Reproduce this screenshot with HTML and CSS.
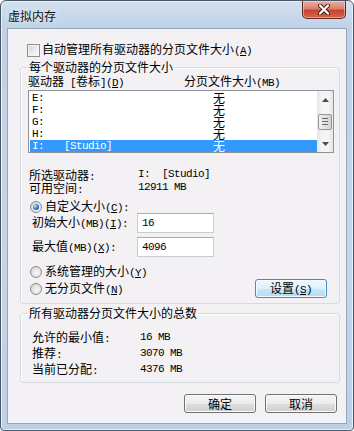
FILE: index.html
```html
<!DOCTYPE html>
<html lang="zh-CN">
<head>
    <meta charset="UTF-8">
    <title>虚拟内存</title>
    <link rel="stylesheet" href="styles.css">
</head>
<body>
    <div class="window">
        <!-- 标题栏 -->
        <div class="titlebar">
            <span class="title">虚拟内存</span>
            <div class="close">
                <svg width="12" height="11" viewBox="0 0 12 11">
                    <path d="M2 1.5 L10 9.5 M10 1.5 L2 9.5" stroke="#4a1a14" stroke-width="4" stroke-linecap="round"/>
                    <path d="M2 1.5 L10 9.5 M10 1.5 L2 9.5" stroke="#fff" stroke-width="2.2" stroke-linecap="round"/>
                </svg>
            </div>
        </div>

        <div class="client">
            <div class="check-row">
                <span class="checkbox"></span>
                <span>自动管理所有驱动器的分页文件大小<span class="m">(<u>A</u>)</span></span>
            </div>

            <!-- 每个驱动器 -->
            <fieldset class="group group-drives">
                <legend>每个驱动器的分页文件大小</legend>
                <div class="col-heads">
                    <span class="col-drive">驱动器<span class="m"> [</span>卷标<span class="m">](<u>D</u>)</span></span>
                    <span>分页文件大小<span class="m">(MB)</span></span>
                </div>
                <div class="listbox">
                    <ul class="drives">
                        <li><span class="drv m">E:</span><span class="size">无</span></li>
                        <li><span class="drv m">F:</span><span class="size">无</span></li>
                        <li><span class="drv m">G:</span><span class="size">无</span></li>
                        <li><span class="drv m">H:</span><span class="size">无</span></li>
                        <li class="selected"><span class="drv m"><span class="letter">I:</span>[Studio]</span><span class="size">无</span></li>
                    </ul>
                    <div class="scrollbar">
                        <div class="sb-btn">
                            <svg width="7" height="4" viewBox="0 0 7 4"><path d="M0 4 L3.5 0 L7 4 Z" fill="#4b4b4b"/></svg>
                        </div>
                        <div class="sb-track">
                            <div class="sb-thumb"><span></span><span></span><span></span></div>
                        </div>
                        <div class="sb-btn">
                            <svg width="7" height="4" viewBox="0 0 7 4"><path d="M0 0 L7 0 L3.5 4 Z" fill="#4b4b4b"/></svg>
                        </div>
                    </div>
                </div>

                <div class="info">
                    <span>所选驱动器<span class="m">:</span></span><span class="m">I:  [Studio]</span>
                    <span>可用空间<span class="m">:</span></span><span class="m">12911 MB</span>
                </div>

                <div class="radio-row custom">
                    <span class="radio checked"></span>
                    <span>自定义大小<span class="m">(<u>C</u>):</span></span>
                </div>
                <div class="size-row">
                    <span class="size-label">初始大小<span class="m">(MB)(<u>I</u>):</span></span>
                    <div class="textbox m">16</div>
                </div>
                <div class="size-row second">
                    <span class="size-label">最大值<span class="m">(MB)(<u>X</u>):</span></span>
                    <div class="textbox m">4096</div>
                </div>
                <div class="radio-row sys">
                    <span class="radio"></span>
                    <span>系统管理的大小<span class="m">(<u>Y</u>)</span></span>
                </div>
                <div class="last-row">
                    <div class="radio-row">
                        <span class="radio"></span>
                        <span>无分页文件<span class="m">(<u>N</u>)</span></span>
                    </div>
                    <button class="button button-set">设置<span class="m">(<u>S</u>)</span></button>
                </div>
            </fieldset>

            <!-- 总数 -->
            <fieldset class="group group-total">
                <legend>所有驱动器分页文件大小的总数</legend>
                <div class="totals">
                    <span>允许的最小值<span class="m">:</span></span><span class="m">16 MB</span>
                    <span>推荐<span class="m">:</span></span><span class="m">3070 MB</span>
                    <span>当前已分配<span class="m">:</span></span><span class="m">4376 MB</span>
                </div>
            </fieldset>

            <div class="actions">
                <button class="button">确定</button>
                <button class="button">取消</button>
            </div>
        </div>
    </div>
</body>
</html>
```

FILE: styles.css
```css
body {
    margin: 0;
    background: #fff;
    font-family: "Noto Sans CJK SC", sans-serif;
    font-size: 12px;
    color: #000;
}
.window {
    width: 354px;
    height: 431px;
    box-sizing: border-box;
    border: 1px solid #4a5868;
    border-radius: 6px 6px 4px 4px;
    padding: 0 6px 6px;
    background: linear-gradient(180deg, #d4e1ef 0px, #bfd2e7 26px, #c5d6ea 60%, #bcd0e6 100%);
    box-shadow: inset 1px 1px 0 #e6eef7, inset -1px -1px 0 #e6eef7;
}
.titlebar {
    height: 27px;
    display: flex;
    align-items: flex-start;
}
.title {
    margin: 7px 0 0 1px;
    line-height: 15px;
    color: #111;
    text-shadow: 0 0 6px rgba(255, 255, 255, 0.9);
}
.close {
    margin-left: auto;
    margin-right: 1px;
    width: 44px;
    height: 18px;
    box-sizing: border-box;
    border: 1px solid #5f2a24;
    border-top: none;
    border-radius: 0 0 5px 5px;
    background: linear-gradient(180deg, #eab0a2 0%, #d8806f 45%, #c6452f 55%, #d5654a 100%);
    box-shadow: inset 0 0 0 1px rgba(255, 220, 210, 0.5);
    display: flex;
    align-items: center;
    justify-content: center;
}
.client {
    height: 396px;
    box-sizing: border-box;
    border: 1px solid #94a6ba;
    background: #f3f1f4;
    padding-top: 14px;
}
.m {
    font-family: "Liberation Mono", monospace;
    font-size: 11px;
    letter-spacing: -0.6px;
    white-space: pre;
}
u {
    text-decoration-thickness: 1px;
    text-underline-offset: 1px;
}

/* casilla */
.check-row {
    display: flex;
    align-items: center;
    height: 14px;
    line-height: 14px;
    margin-left: 19px;
}
.checkbox {
    width: 13px;
    height: 13px;
    box-sizing: border-box;
    border: 1px solid #8f8f8f;
    background: linear-gradient(135deg, #d6d6d6, #fbfbfb);
    box-shadow: inset 0 0 0 1px #f6f6f6;
    margin-right: 2px;
}

/* group boxes */
.group {
    margin: 3px 6px 0 12px;
    padding: 0 5px 5px 7px;
    border: 1px solid #d3dce3;
    border-radius: 3px;
    box-shadow: inset 1px 1px 0 #fff;
    min-inline-size: 0;
}
.group legend {
    padding: 0 1px;
    line-height: 14px;
    height: 14px;
}
.group-total {
    margin-top: 2px;
    padding-top: 9px;
}
.col-heads {
    display: flex;
    line-height: 13px;
    height: 13px;
}
.col-drive {
    width: 156px;
}

/* listbox */
.listbox {
    margin-top: 3px;
    height: 63px;
    box-sizing: border-box;
    border: 1px solid #8e939a;
    background: #fff;
    display: flex;
}
.drives {
    list-style: none;
    margin: 0;
    padding: 1px 0 0;
    flex: 1;
}
.drives li {
    height: 12px;
    line-height: 12px;
    display: flex;
    padding-left: 2px;
    margin-left: 1px;
}
.drives li.selected {
    background: #3399ff;
    color: #fff;
}
.drv {
    width: 181px;
}
.letter {
    display: inline-block;
    width: 32px;
}
.size {
    line-height: 12px;
}
.scrollbar {
    width: 16px;
    display: flex;
    flex-direction: column;
    background: linear-gradient(90deg, #e6e6e6, #f4f4f4 30%, #f4f4f4 70%, #e6e6e6);
}
.sb-btn {
    height: 17px;
    display: flex;
    align-items: center;
    justify-content: center;
}
.sb-track {
    flex: 1;
    display: flex;
    align-items: center;
    justify-content: center;
}
.sb-thumb {
    width: 14px;
    height: 16px;
    box-sizing: border-box;
    border: 1px solid #979797;
    border-radius: 2px;
    background: linear-gradient(90deg, #f2f2f2, #e2e2e2 50%, #d2d2d2);
    display: flex;
    flex-direction: column;
    justify-content: center;
    align-items: center;
    gap: 2px;
}
.sb-thumb span {
    width: 6px;
    height: 1px;
    background: #6a6a6a;
}

/* detalles */
.info {
    margin-top: 15px;
    padding-left: 1px;
    display: grid;
    grid-template-columns: 109px 1fr;
    grid-auto-rows: 13px;
    line-height: 13px;
}
.radio-row {
    display: flex;
    align-items: center;
    height: 12px;
    line-height: 12px;
    margin-left: 2px;
}
.radio-row.custom {
    margin-top: 7px;
}
.radio {
    width: 12px;
    height: 12px;
    box-sizing: border-box;
    border-radius: 50%;
    border: 1px solid #8c8c8c;
    background: radial-gradient(circle at 60% 60%, #f8f8f8, #d0d0d0);
    margin-right: 3px;
    display: flex;
    align-items: center;
    justify-content: center;
}
.radio.checked::after {
    content: "";
    width: 6px;
    height: 6px;
    border-radius: 50%;
    background: radial-gradient(circle at 35% 35%, #b8e6fb, #2a78c0 55%, #0f3f7a);
}
.size-row {
    display: flex;
    align-items: center;
    height: 20px;
    padding-left: 4px;
}
.size-row.second {
    margin-top: 4px;
}
.size-label {
    width: 105px;
    line-height: 14px;
}
.textbox {
    width: 77px;
    height: 20px;
    box-sizing: border-box;
    border: 1px solid #c6cdd5;
    border-top-color: #a8aeb6;
    background: #fff;
    padding-left: 4px;
    line-height: 18px;
}
.radio-row.sys {
    margin-top: 9px;
}
.last-row {
    margin-top: 1px;
    height: 19px;
    display: flex;
    align-items: center;
}
.last-row .radio-row {
    margin-top: 0;
}

/* botones */
.button {
    width: 72px;
    height: 19px;
    padding: 0;
    border: 1px solid #707070;
    border-radius: 3px;
    background: linear-gradient(180deg, #f4f4f4 0%, #ececec 50%, #dedede 50%, #d0d0d0 100%);
    box-shadow: inset 0 0 0 1px #fbfbfb;
    font-family: "Noto Sans CJK SC", sans-serif;
    font-size: 12px;
    line-height: 15px;
    color: #000;
}
.button-set {
    margin-left: auto;
    margin-right: 7px;
    border-color: #4a8ac0;
    background: linear-gradient(180deg, #eef8fe 0%, #dcf1fc 50%, #c6e8fb 50%, #b3dcf3 100%);
    box-shadow: inset 0 0 0 1px #f4fbff;
}
.totals {
    display: grid;
    grid-template-columns: 108px 1fr;
    grid-auto-rows: 16px;
    padding-left: 4px;
    line-height: 16px;
}
.actions {
    margin-top: 11px;
    padding-right: 9px;
    display: flex;
    justify-content: flex-end;
    gap: 9px;
}
```
